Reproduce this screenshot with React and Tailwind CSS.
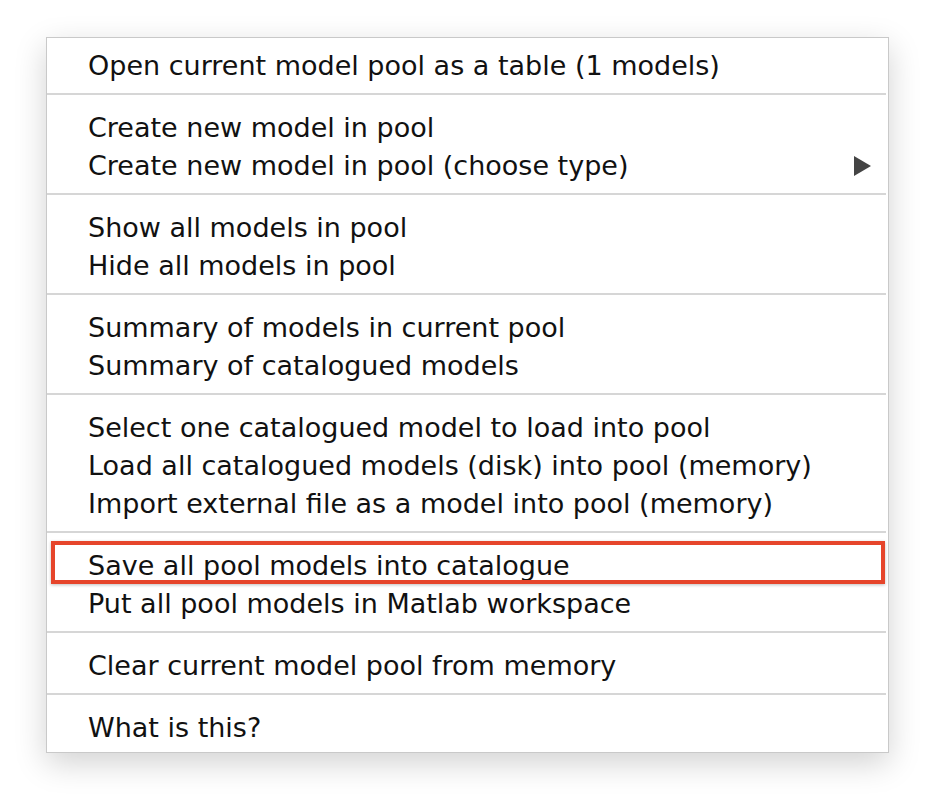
const groups = [
  [{ label: "Open current model pool as a table (1 models)" }],
  [
    { label: "Create new model in pool" },
    { label: "Create new model in pool (choose type)", submenu: true },
  ],
  [{ label: "Show all models in pool" }, { label: "Hide all models in pool" }],
  [
    { label: "Summary of models in current pool" },
    { label: "Summary of catalogued models" },
  ],
  [
    { label: "Select one catalogued model to load into pool" },
    { label: "Load all catalogued models (disk) into pool (memory)" },
    { label: "Import external file as a model into pool (memory)" },
  ],
  [
    { label: "Save all pool models into catalogue", marked: true },
    { label: "Put all pool models in Matlab workspace" },
  ],
  [{ label: "Clear current model pool from memory" }],
  [{ label: "What is this?" }],
];

const MenuItem = ({ label, submenu, marked }) => (
  <div className="relative h-[38px] flex items-center pt-[6px] pl-[41px] pr-[16px] text-[#111] whitespace-nowrap">
    <span className="flex-1 leading-[32px]">{label}</span>
    {submenu && (
      <svg width="17" height="20" viewBox="0 0 17 20" className="mr-[1px]">
        <polygon points="0,0 17,10 0,20" fill="#444" />
      </svg>
    )}
    {marked && (
      <div className="absolute left-[4px] right-[3px] -top-[3px] -bottom-[2px] border-[4px] border-[#e6452b] shadow-[0_1px_3px_rgba(0,0,0,0.25)]" />
    )}
  </div>
);

export default function App() {
  return (
    <div className="w-full h-[808px] bg-white pt-[37px] pl-[46px]">
      <div
        className="w-[843px] bg-white border border-[#c9c9c9] pt-[6px] pb-[8px] text-[27px] shadow-[0_10px_30px_rgba(0,0,0,0.18)]"
        style={{ fontFamily: '"DejaVu Sans", "Liberation Sans", sans-serif' }}
      >
        {groups.map((items, i) => (
          <div key={i}>
            {i > 0 && <div className="h-[2px] my-[11px] mr-[2px] bg-[#d6d6d6]" />}
            {items.map((item) => (
              <MenuItem key={item.label} {...item} />
            ))}
          </div>
        ))}
      </div>
    </div>
  );
}
